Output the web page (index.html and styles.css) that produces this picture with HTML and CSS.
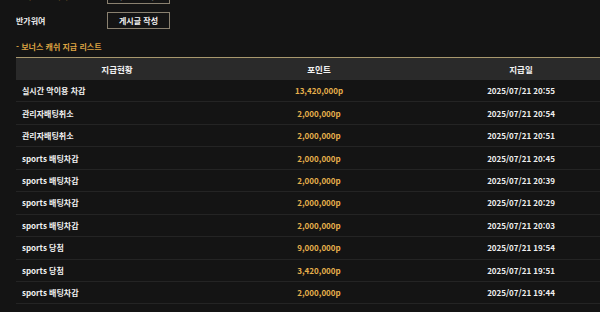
FILE: index.html
```html
<!DOCTYPE html>
<html lang="ko">
<head>
<meta charset="utf-8">
<link rel="stylesheet" href="styles.css">
</head>
<body>
<div class="page">
  <div class="form">
    <div class="form-row first">
      <span class="label gold">기본보증 수수</span>
      <button class="btn">기본보증 작성</button>
    </div>
    <div class="form-row">
      <span class="label">반가워여</span>
      <button class="btn">게시글 작성</button>
    </div>
  </div>
  <div class="title">- 보너스 캐쉬 지급 리스트</div>
  <table class="list">
    <thead>
      <tr><th>지급현황</th><th>포인트</th><th>지급일</th></tr>
    </thead>
    <tbody>
      <tr><td>실시간 악이용 차감</td><td class="pt">13,420,000p</td><td class="dt">2025/07/21 20:55</td></tr>
      <tr><td>관리자배팅취소</td><td class="pt">2,000,000p</td><td class="dt">2025/07/21 20:54</td></tr>
      <tr><td>관리자배팅취소</td><td class="pt">2,000,000p</td><td class="dt">2025/07/21 20:51</td></tr>
      <tr><td>sports 배팅차감</td><td class="pt">2,000,000p</td><td class="dt">2025/07/21 20:45</td></tr>
      <tr><td>sports 배팅차감</td><td class="pt">2,000,000p</td><td class="dt">2025/07/21 20:39</td></tr>
      <tr><td>sports 배팅차감</td><td class="pt">2,000,000p</td><td class="dt">2025/07/21 20:29</td></tr>
      <tr><td>sports 배팅차감</td><td class="pt">2,000,000p</td><td class="dt">2025/07/21 20:03</td></tr>
      <tr><td>sports 당첨</td><td class="pt">9,000,000p</td><td class="dt">2025/07/21 19:54</td></tr>
      <tr><td>sports 당첨</td><td class="pt">3,420,000p</td><td class="dt">2025/07/21 19:51</td></tr>
      <tr><td>sports 배팅차감</td><td class="pt">2,000,000p</td><td class="dt">2025/07/21 19:44</td></tr>
    </tbody>
  </table>
</div>
</body>
</html>
```

FILE: styles.css
```css
html, body {
  margin: 0;
  padding: 0;
  background: #141414;
  overflow: hidden;
}
body {
  font-family: "Noto Sans CJK KR", "Noto Sans", sans-serif;
  color: #f0f0f0;
  font-size: 8px;
  font-weight: 700;
}
.page {
  padding-left: 16px;
  width: 584px;
  overflow: hidden;
}
.form {
  display: flex;
  flex-direction: column;
  gap: 8px;
}
.form-row {
  display: flex;
  align-items: center;
  height: 17px;
}
.form-row.first {
  margin-top: -13px;
}
.label {
  width: 91px;
  font-size: 8px;
  font-weight: 700;
  color: #ececec;
}
.label.gold {
  color: #d9a13c;
  padding-left: 8px;
  width: 83px;
}
.btn {
  width: 63px;
  height: 17px;
  box-sizing: border-box;
  background: #141414;
  border: 1px solid #8a8170;
  color: #f2f2f2;
  font-family: inherit;
  font-size: 8px;
  font-weight: 700;
  padding: 0;
}
.title {
  margin-top: 10px;
  color: #dca343;
  font-size: 8px;
  font-weight: 700;
  height: 16px;
  line-height: 16px;
}
.list {
  width: 606px;
  border-collapse: collapse;
  table-layout: fixed;
  margin-top: 2px;
}
.list th {
  background: #2a2a2a;
  border-top: 1px solid #a8986e;
  height: 22px;
  font-size: 8.5px;
  font-weight: 700;
  color: #f2f2f2;
  text-align: center;
  padding: 0;
}
.list td {
  height: 21.45px;
  padding: 0;
  border-bottom: 1px solid #242424;
  font-size: 8px;
  color: #f0f0f0;
  text-align: center;
}
.list td:first-child {
  text-align: left;
  padding-left: 6px;
}
.list td.pt {
  color: #e7b04c;
}
```
